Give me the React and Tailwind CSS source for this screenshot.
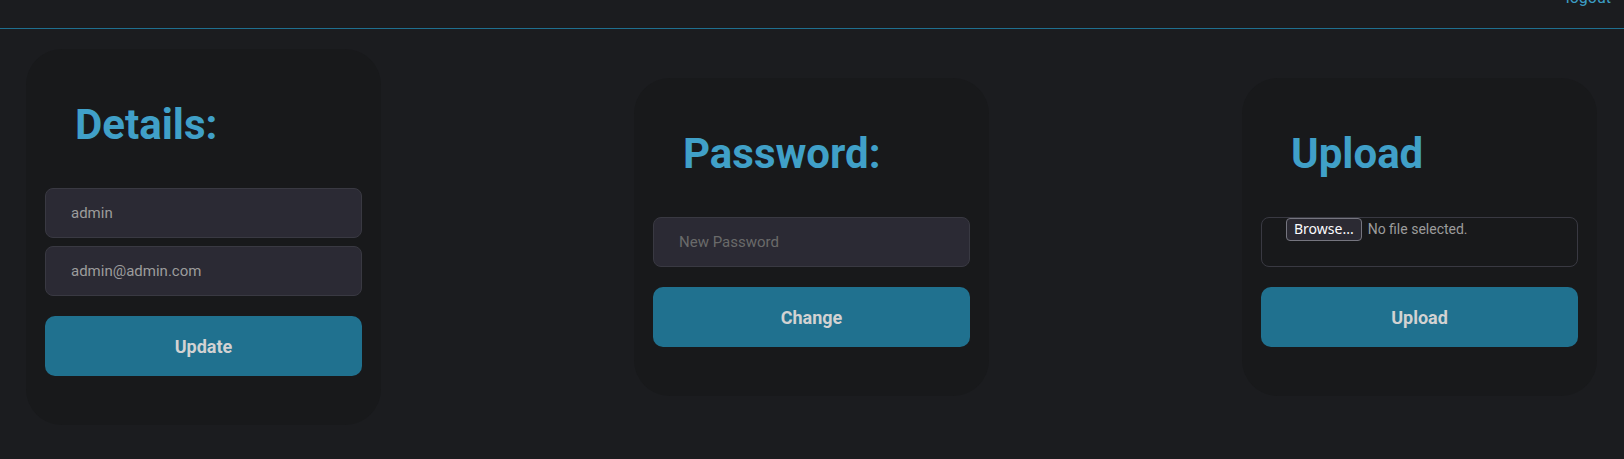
import React from 'react';

const font = { fontFamily: 'Roboto, "Liberation Sans", sans-serif' };

const Card = ({ title, children }) => (
  <div className="w-[355px] rounded-[36px] bg-[#18191b] px-[19px] pt-[51px] pb-[49px]">
    <h2 className="ml-[30px] mb-[38px] text-[42px] leading-[50px] font-bold text-[#40a0c8]">{title}</h2>
    {children}
  </div>
);

const TextInput = ({ value, placeholder }) => (
  <input
    type="text"
    defaultValue={value}
    placeholder={placeholder}
    className="block w-full h-[50px] rounded-[8px] border border-[#393942] bg-[#2b2a34] pl-[25px] text-[15px] text-[#9c9c9c] placeholder:text-[#6a6a6a] outline-none"
  />
);

const ActionButton = ({ label }) => (
  <button className="mt-[20px] block w-full h-[60px] rounded-[10px] bg-[#20718f] text-[18px] font-bold text-[#d2d2d2]">
    {label}
  </button>
);

export default function App() {
  return (
    <div className="min-h-screen bg-[#1b1c1f]" style={font}>
      <header className="h-[29px] border-b border-[#1f6f8f] flex justify-end pr-[13px] overflow-hidden">
        <a href="#" className="-mt-[12px] text-[16px] leading-[20px] text-[#3c9cc4]">logout</a>
      </header>

      <main className="flex items-center justify-between pl-[26px] pr-[27px] pt-[20px]">
        <Card title="Details:">
          <div className="flex flex-col gap-[8px]">
            <TextInput value="admin" />
            <TextInput value="admin@admin.com" />
          </div>
          <ActionButton label="Update" />
        </Card>

        <Card title="Password:">
          <TextInput placeholder="New Password" />
          <ActionButton label="Change" />
        </Card>

        <Card title="Upload">
          <div className="h-[50px] rounded-[8px] border border-[#393942] pl-[24px] flex items-start">
            <span
              className="h-[23px] px-[7px] rounded-[4px] border border-[#75757f] bg-[#2b2a33] text-[14px] leading-[20px] text-[#fbfbfe]"
              style={{ fontFamily: '"Noto Sans", sans-serif' }}
            >
              Browse...
            </span>
            <span className="ml-[6px] text-[14px] leading-[23px] text-[#9c9c9c]">No file selected.</span>
          </div>
          <ActionButton label="Upload" />
        </Card>
      </main>
    </div>
  );
}
